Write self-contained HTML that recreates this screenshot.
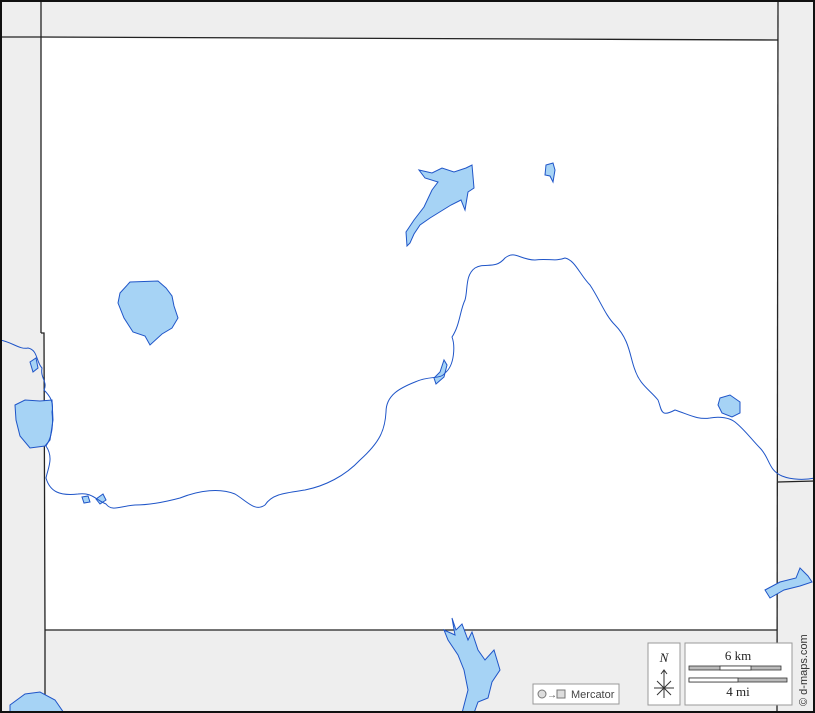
<!DOCTYPE html>
<html><head><meta charset="utf-8"><style>
html,body{margin:0;padding:0;background:#fff}
svg{display:block}
text{font-family:"Liberation Serif",serif}
</style></head><body>
<svg width="815" height="713" viewBox="0 0 815 713" xmlns="http://www.w3.org/2000/svg">
<rect x="0" y="0" width="815" height="713" fill="#eeeeee"/>
<polygon points="41,38 778,40 777,630 45,630 44,333 41,333" fill="#ffffff"/>
<g stroke="#222" stroke-width="1.3" fill="none">
<polyline points="0,37 41,37 778,40"/>
<line x1="41" y1="0" x2="41" y2="333"/>
<polyline points="41,333 44,333 45,630 45,713"/>
<line x1="45" y1="630" x2="777" y2="630"/>
<line x1="778" y1="0" x2="777" y2="713"/>
<line x1="778" y1="482" x2="815" y2="481"/>
</g>
<g fill="#a6d3f5" stroke="#1f55c8" stroke-width="1">
<path d="M120,293 L130,282 L158,281 L166,288 L172,296 L174,306 L178,318 L172,328 L162,334 L150,345 L145,336 L133,332 L124,318 L118,303 Z"/>
<path d="M419,170 L432,173 L442,168 L454,172 L466,168 L472,165 L474,188 L468,192 L465,210 L461,200 L451,205 L430,218 L420,225 L414,234 L410,243 L407,246 L406,232 L414,220 L424,207 L432,190 L438,182 L425,178 Z"/>
<path d="M546,165 L553,163 L555,170 L553,182 L550,176 L545,175 Z"/>
<path d="M15,405 L25,400 L40,401 L52,400 L53,420 L50,440 L45,446 L30,448 L20,436 L16,420 Z"/>
<path d="M720,398 L730,395 L740,402 L740,413 L732,417 L722,413 L718,405 Z"/>
<path d="M440,372 L444,360 L447,365 L444,377 L436,384 L434,378 Z"/>
<path d="M96,499 L103,494 L106,500 L100,504 Z"/>
<path d="M82,497 L88,496 L90,502 L84,503 Z"/>
<path d="M30,362 L36,358 L38,368 L33,372 Z"/>
<path d="M452,618 L456,630 L462,624 L468,640 L472,632 L478,650 L485,660 L494,650 L500,670 L492,682 L488,698 L478,702 L474,713 L462,713 L468,690 L464,670 L458,655 L448,640 L444,630 L455,635 Z"/>
<path d="M765,590 L780,582 L796,578 L800,568 L808,576 L812,582 L800,586 L784,590 L770,598 Z"/>
<path d="M10,705 L25,694 L40,692 L55,700 L64,713 L10,713 Z"/>
</g>
<path d="M0,340 C12,342 20,350 28,348 C38,350 36,362 42,368 C40,378 48,382 44,390 C50,396 54,402 52,412 C54,430 50,440 46,446 C54,458 48,468 46,478 C50,492 60,496 78,494 C92,492 96,500 106,504 C112,512 120,506 135,505 C150,505 165,502 180,498 C200,490 220,488 235,494 C248,502 255,512 265,505 C272,494 285,493 305,490 C325,486 345,476 360,460 C380,442 385,430 386,412 C386,395 400,388 415,382 C430,375 440,380 445,373 C455,365 455,345 452,337 C460,325 460,310 465,300 C468,290 465,275 475,268 C485,262 495,270 505,258 C515,250 520,260 535,260 C548,258 555,262 565,258 C575,260 580,275 590,285 C600,300 605,315 615,325 C630,340 630,358 635,370 C640,385 650,390 658,400 C662,410 660,418 675,410 C690,415 698,420 710,418 C720,416 730,418 735,422 C745,430 752,440 760,448 C770,458 768,470 782,476 C792,480 805,480 815,478" fill="none" stroke="#1f55c8" stroke-width="1"/>
<g stroke="#999" fill="#fff">
<rect x="533" y="684" width="86" height="20"/>
<rect x="648" y="643" width="32" height="62"/>
<rect x="685" y="643" width="107" height="62"/>
</g>
<circle cx="542" cy="694" r="4" fill="#ddd" stroke="#777"/>
<text x="547" y="698" font-size="10" fill="#555" font-family="Liberation Sans">→</text>
<rect x="557" y="690" width="8" height="8" fill="#ddd" stroke="#777"/>
<text x="571" y="698" font-size="11" fill="#444" style="font-family:'Liberation Sans',sans-serif">Mercator</text>
<text x="664" y="662" font-size="13" font-style="italic" text-anchor="middle" fill="#222">N</text>
<g stroke="#333" stroke-width="1">
<line x1="664" y1="670" x2="664" y2="698"/><line x1="654" y1="688" x2="674" y2="688"/>
<line x1="657" y1="681" x2="671" y2="695"/><line x1="671" y1="681" x2="657" y2="695"/>
<polyline points="661,674 664,670 667,674" fill="none"/>
</g>
<text x="738" y="660" font-size="13" text-anchor="middle" fill="#222">6 km</text>
<rect x="689" y="666" width="92" height="4" fill="#bbb" stroke="#333" stroke-width="0.8"/>
<rect x="720" y="666" width="31" height="4" fill="#fff" stroke="#333" stroke-width="0.8"/>
<rect x="689" y="678" width="98" height="4" fill="#bbb" stroke="#333" stroke-width="0.8"/>
<rect x="689" y="678" width="49" height="4" fill="#fff" stroke="#333" stroke-width="0.8"/>
<text x="738" y="696" font-size="13" text-anchor="middle" fill="#222">4 mi</text>
<text transform="translate(807,706) rotate(-90)" font-size="11" fill="#333" style="font-family:'Liberation Sans',sans-serif">© d-maps.com</text>
<rect x="1" y="1" width="813" height="711" fill="none" stroke="#111" stroke-width="2"/>
</svg>
</body></html>
